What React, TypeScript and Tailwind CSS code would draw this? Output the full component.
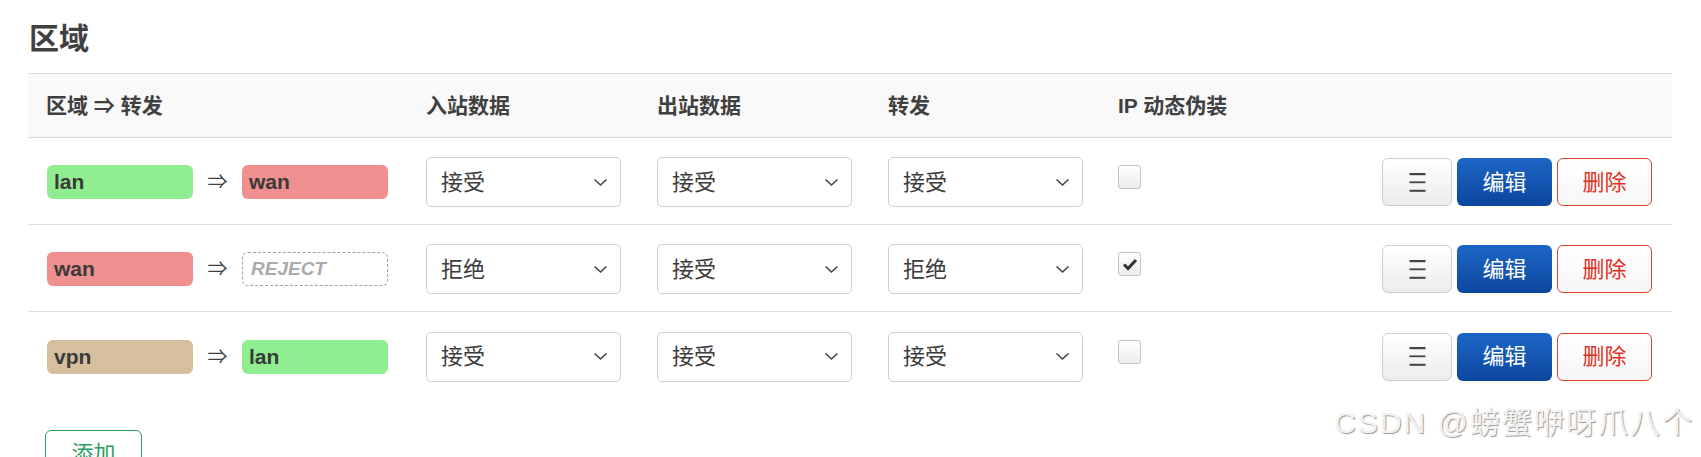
import type { ReactNode } from "react";

type Zone = "lan" | "wan" | "vpn";

type ZoneRow = {
  src: Zone;
  dest: Zone | "REJECT";
  input: string;
  output: string;
  forward: string;
  masq: boolean;
};

const rows: ZoneRow[] = [
  { src: "lan", dest: "wan", input: "接受", output: "接受", forward: "接受", masq: false },
  { src: "wan", dest: "REJECT", input: "拒绝", output: "接受", forward: "拒绝", masq: true },
  { src: "vpn", dest: "lan", input: "接受", output: "接受", forward: "接受", masq: false },
];

const zoneColor: Record<Zone, string> = {
  lan: "bg-[#90ee90]",
  wan: "bg-[#f08f8f]",
  vpn: "bg-[#d6bf9c]",
};

const font = { fontFamily: '"Liberation Sans", "Noto Sans CJK SC", sans-serif' };

function ZoneBadge({ zone }: { zone: Zone | "REJECT" }) {
  if (zone === "REJECT") {
    return (
      <div className="w-[146px] h-[34px] rounded-[6px] border border-dashed border-[#a0a0a0] flex items-center pl-[8px] text-[19px] font-bold italic text-[#aaa]">
        REJECT
      </div>
    );
  }
  return (
    <div className={`w-[146px] h-[34px] rounded-[6px] ${zoneColor[zone]} flex items-center pl-[7px] text-[21px] font-bold text-[#3a3a3a]`}>
      {zone}
    </div>
  );
}

function FakeSelect({ value }: { value: string }) {
  return (
    <div className="w-[195px] h-[50px] rounded-[5px] border border-[#cfcfcf] bg-white flex items-center justify-between pl-[14px] pr-[12px] text-[22px] text-[#3c3c3c]">
      <span>{value}</span>
      <svg width="15" height="9" viewBox="0 0 15 9" fill="none">
        <path d="M1.5 1.5 L7.5 7 L13.5 1.5" stroke="#444" strokeWidth="1.6" />
      </svg>
    </div>
  );
}

function Checkbox({ checked }: { checked: boolean }) {
  return (
    <div className="w-[23px] h-[24px] rounded-[3px] border border-[#c4c4c4] bg-gradient-to-b from-white to-[#ececec] flex items-center justify-center">
      {checked && (
        <svg width="16" height="13" viewBox="0 0 16 13" fill="none">
          <path d="M2 6.5 L6 10.5 L14 2" stroke="#333" strokeWidth="3" />
        </svg>
      )}
    </div>
  );
}

function Cell({ children, className = "" }: { children: ReactNode; className?: string }) {
  return <div className={`pl-[18px] ${className}`}>{children}</div>;
}

export default function App() {
  return (
    <div className="relative h-[457px] w-[1701px] overflow-hidden bg-white text-[#404040]" style={font}>
      <div className="pl-[28px] pr-[29px]">
        <h2 className="pt-[21px] pl-[1px] text-[30px] leading-[36px] font-bold text-[#404040]">区域</h2>

        <div className="mt-[16px]">
          <div className="grid grid-cols-[380px_231px_231px_230px_1fr] h-[65px] items-center bg-[#f9f9f9] border-y border-[#dcdcdc] text-[21px] font-bold">
            <Cell>区域 ⇒ 转发</Cell>
            <Cell>入站数据</Cell>
            <Cell>出站数据</Cell>
            <Cell>转发</Cell>
            <Cell>IP 动态伪装</Cell>
          </div>

          {rows.map((r, i) => (
            <div
              key={i}
              className={`grid grid-cols-[380px_231px_231px_230px_1fr] h-[87px] pt-[2px] items-center ${i < rows.length - 1 ? "border-b border-[#dcdcdc]" : ""}`}
            >
              <Cell className="flex items-center">
                <div className="pl-[1px]">
                  <ZoneBadge zone={r.src} />
                </div>
                <span className="w-[49px] text-center text-[20px] text-[#404040]">⇒</span>
                <ZoneBadge zone={r.dest} />
              </Cell>
              <Cell>
                <FakeSelect value={r.input} />
              </Cell>
              <Cell>
                <FakeSelect value={r.output} />
              </Cell>
              <Cell>
                <FakeSelect value={r.forward} />
              </Cell>
              <div className="flex items-center justify-between pl-[18px] pr-[20px]">
                <div className="-mt-[10px]">
                  <Checkbox checked={r.masq} />
                </div>
                <div className="flex gap-[5px]">
                  <button className="w-[70px] h-[48px] rounded-[6px] border border-[#cdcdcd] bg-gradient-to-b from-white to-[#ececec] flex items-center justify-center">
                    <svg width="17" height="19" viewBox="0 0 17 19">
                      <rect x="0.5" y="0" width="16" height="2.2" fill="#444" />
                      <rect x="0.5" y="8.4" width="16" height="1.8" fill="#444" />
                      <rect x="0.5" y="16.8" width="16" height="2" fill="#444" />
                    </svg>
                  </button>
                  <button className="w-[95px] h-[48px] rounded-[6px] bg-gradient-to-b from-[#1d66c6] to-[#0b479e] text-white text-[22px]">
                    编辑
                  </button>
                  <button className="w-[95px] h-[48px] rounded-[6px] border border-[#d8452a] bg-gradient-to-b from-white to-[#f6f6f6] text-[#e0301e] text-[22px]">
                    删除
                  </button>
                </div>
              </div>
            </div>
          ))}
        </div>

        <button className="mt-[31px] ml-[17px] w-[97px] h-[44px] rounded-[6px] border border-[#2aa062] bg-white text-[#2aa062] text-[22px] flex items-start justify-center pt-[6px]">
          添加
        </button>
      </div>

      <div className="absolute right-[7px] top-[405px] text-[30px] leading-[36px] tracking-[2px] text-[#f2f2f2] [text-shadow:1px_1px_1px_#9a9a9a] whitespace-nowrap">
        CSDN @螃蟹咿呀爪八个
      </div>
    </div>
  );
}
